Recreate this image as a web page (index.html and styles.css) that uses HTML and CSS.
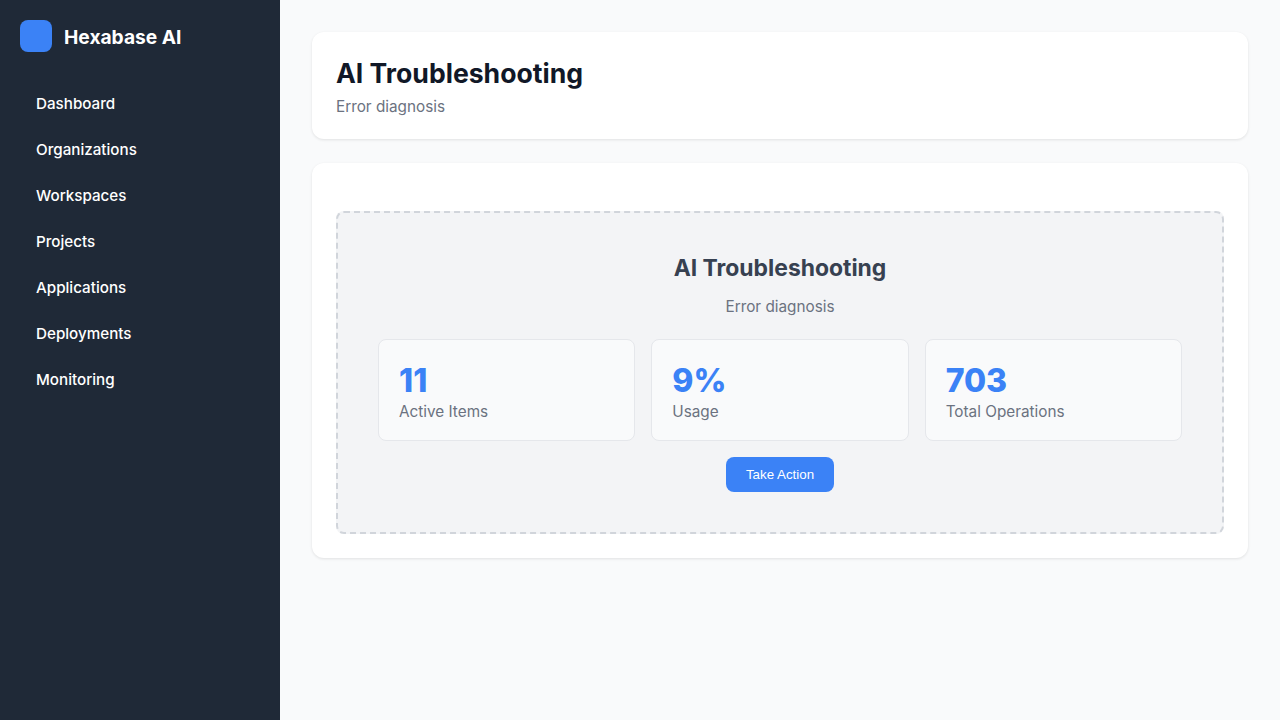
FILE: index.html
```html
<!DOCTYPE html>
<html lang="en">
<head>
    <meta charset="UTF-8">
    <meta name="viewport" content="width=device-width, initial-scale=1.0">
    <title>AI Troubleshooting</title>
    <link rel="stylesheet" href="styles.css">
</head>
<body>
    <div class="layout">
        <aside class="sidebar">
            <div class="brand">
                <div class="brand-logo"></div>
                <span class="brand-name">Hexabase AI</span>
            </div>
            <nav class="nav">
                <a class="nav-item">Dashboard</a>
                <a class="nav-item">Organizations</a>
                <a class="nav-item">Workspaces</a>
                <a class="nav-item">Projects</a>
                <a class="nav-item">Applications</a>
                <a class="nav-item">Deployments</a>
                <a class="nav-item">Monitoring</a>
            </nav>
        </aside>
        <main class="main">
            <header class="card page-header">
                <h1>AI Troubleshooting</h1>
                <p>Error diagnosis</p>
            </header>
            <section class="card content">
                <div class="placeholder">
                    <h2>AI Troubleshooting</h2>
                    <p class="placeholder-text">Error diagnosis</p>
                    <div class="stats">
                        <div class="stat">
                            <div class="stat-value">11</div>
                            <div class="stat-label">Active Items</div>
                        </div>
                        <div class="stat">
                            <div class="stat-value">9%</div>
                            <div class="stat-label">Usage</div>
                        </div>
                        <div class="stat">
                            <div class="stat-value">703</div>
                            <div class="stat-label">Total Operations</div>
                        </div>
                    </div>
                    <button class="btn">Take Action</button>
                </div>
            </section>
        </main>
    </div>
</body>
</html>
```

FILE: styles.css
```css
* {
    box-sizing: border-box;
    margin: 0;
    padding: 0;
}
body {
    font-family: Inter, "Liberation Sans", sans-serif;
    background-color: #f9fafb;
    color: #111827;
}
.layout {
    display: flex;
    min-height: 720px;
}
.sidebar {
    width: 280px;
    flex-shrink: 0;
    background-color: #1f2937;
    color: white;
    padding: 20px;
}
.brand {
    display: flex;
    align-items: center;
    gap: 12px;
    margin-bottom: 32px;
}
.brand-logo {
    width: 32px;
    height: 32px;
    border-radius: 8px;
    background-color: #3b82f6;
}
.brand-name {
    font-size: 19.2px;
    line-height: 24px;
    padding-top: 2px;
    font-weight: 700;
}
.nav {
    display: flex;
    flex-direction: column;
    gap: 8px;
}
.nav-item {
    padding: 9px 16px 7px;
    font-size: 15.2px;
    line-height: 22px;
    font-weight: 450;
    height: 38px;
}
.main {
    flex: 1;
    padding: 32px;
}
.card {
    background-color: white;
    border-radius: 12px;
    box-shadow: 0 1px 3px rgba(0, 0, 0, 0.1);
    padding: 24px;
}
.page-header {
    margin-bottom: 24px;
}
.page-header h1 {
    font-size: 26.6px;
    line-height: 34px;
    font-weight: 750;
    margin-bottom: 8px;
}
.page-header p {
    font-size: 15.3px;
    line-height: 17px;
    color: #6b7280;
}
.content {
    padding-top: 48px;
}
.placeholder {
    background-color: #f3f4f6;
    border: 2px dashed #d1d5db;
    border-radius: 8px;
    padding: 39px 40px 40px;
    text-align: center;
}
.placeholder h2 {
    font-size: 22.9px;
    line-height: 32px;
    font-weight: 650;
    color: #374151;
    margin-bottom: 11px;
}
.placeholder-text {
    font-size: 15.3px;
    line-height: 24px;
    color: #6b7280;
    margin-bottom: 20px;
}
.stats {
    display: grid;
    grid-template-columns: repeat(3, 1fr);
    gap: 16px;
    margin-bottom: 16px;
}
.stat {
    background-color: #f9fafb;
    border: 1px solid #e5e7eb;
    border-radius: 8px;
    padding: 22px 20px 17px;
    text-align: left;
}
.stat-value {
    font-size: 32px;
    line-height: 38px;
    font-weight: 800;
    color: #3b82f6;
    margin-bottom: 1px;
}
.stat-label {
    font-size: 15.3px;
    line-height: 22px;
    color: #6b7280;
}
.btn {
    display: inline-block;
    font-family: "Liberation Sans", Arial, sans-serif;
    font-size: 13.33px;
    font-weight: 400;
    height: 35px;
    padding: 0 20px;
    border: none;
    border-radius: 8px;
    background-color: #3b82f6;
    color: white;
}
```
